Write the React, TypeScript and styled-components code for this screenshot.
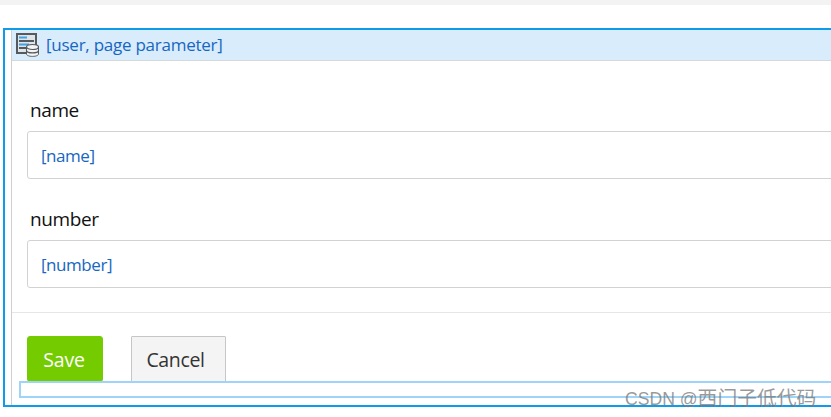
import React from "react";
import styled, { createGlobalStyle } from "styled-components";

const Global = createGlobalStyle`
  html, body { margin: 0; padding: 0; background: #fff; overflow: hidden; }
  body { width: 831px; height: 417px; font-family: "Open Sans", "Noto Sans", sans-serif; }
`;
const Page = styled.div`
  position: relative;
  width: 831px;
  height: 417px;
  overflow: hidden;
`;
const TopStrip = styled.div`
  height: 5px;
  background: #f3f3f3;
`;
const Frame = styled.div`
  box-sizing: border-box;
  margin: 23px 0 0 3px;
  width: 860px;
  height: 379px;
  border: 2px solid #0e9cea;
  padding-left: 6px;
  background: #fff;
`;
const Inner = styled.div`
  height: 100%;
  border-left: 1px solid #d0d0d0;
`;
const Header = styled.div`
  box-sizing: border-box;
  display: flex;
  align-items: center;
  gap: 7px;
  height: 31px;
  padding-left: 4px;
  background: #d9ecfb;
  border-bottom: 1px solid #d5d9dc;
  color: #1766c2;
  font-size: 17px;
  letter-spacing: -0.25px;
`;
const HeaderTitle = styled.span`
  padding-bottom: 2px;
`;
const Fields = styled.div`
  display: flex;
  flex-direction: column;
  gap: 28px;
  padding: 37px 0 24px 15px;
  border-bottom: 1px solid #e6e6e6;
`;
const Field = styled.div`
  display: flex;
  flex-direction: column;
  gap: 9px;
`;
const Label = styled.label`
  padding-left: 3px;
  font-size: 19px;
  line-height: 24px;
  color: #111;
  letter-spacing: -0.4px;
`;
const Input = styled.div`
  box-sizing: border-box;
  display: flex;
  align-items: center;
  height: 48px;
  padding-left: 13px;
  border: 1px solid #d2d2d2;
  border-radius: 3px;
  color: #1766c2;
  font-size: 17px;
  letter-spacing: -0.45px;
`;
const Actions = styled.div`
  display: flex;
  gap: 28px;
  padding: 23px 0 0 15px;
`;
const Button = styled.button<{ $primary?: boolean }>`
  box-sizing: border-box;
  height: 46px;
  padding: 0 ${(p) => (p.$primary ? "2px" : "6px")} 0 0;
  width: ${(p) => (p.$primary ? "76px" : "95px")};
  border: 1px solid ${(p) => (p.$primary ? "#74cc00" : "#c6c6c6")};
  border-radius: ${(p) => (p.$primary ? "3px" : "1px")};
  background: ${(p) => (p.$primary ? "#74cc00" : "#f4f4f4")};
  color: ${(p) => (p.$primary ? "#fff" : "#333")};
  font-family: inherit;
  font-size: 19.5px;
  letter-spacing: ${(p) => (p.$primary ? "-0.2px" : "-0.35px")};
`;
const DropZone = styled.div`
  position: absolute;
  left: 19px;
  top: 381px;
  width: 830px;
  height: 17px;
  box-sizing: border-box;
  border: 2px solid #9ed4f7;
  background: #fff;
`;
const Watermark = styled.div`
  position: absolute;
  left: 625px;
  top: 387px;
  font-family: "Liberation Sans", "Noto Sans CJK SC", sans-serif;
  font-size: 17.6px;
  line-height: 22px;
  color: rgba(120, 120, 120, 0.75);
  white-space: nowrap;
`;
const WatermarkCjk = styled.span`
  font-size: 19.8px;
`;

const DataIcon = () => (
  <svg width="23" height="24" viewBox="0 0 23 24">
    <rect x="1" y="1" width="19" height="19" fill="#dfe4e8" stroke="#555a5f" strokeWidth="2" />
    <rect x="3" y="3.5" width="8" height="2" fill="#3fa2ea" />
    <rect x="3" y="7" width="15" height="2" fill="#555a5f" />
    <rect x="3" y="10.5" width="10" height="2" fill="#3fa2ea" />
    <rect x="3" y="14" width="8" height="2" fill="#555a5f" />
    <path d="M10.5 14v7c0 1.4 2.7 2.4 6 2.4s6-1 6-2.4v-7z" fill="#f4f4f4" stroke="#555a5f" strokeWidth="1" />
    <ellipse cx="16.5" cy="14" rx="6" ry="2.5" fill="#f4f4f4" stroke="#555a5f" strokeWidth="1.2" />
    <path d="M10.5 17.5c0 1.4 2.7 2.4 6 2.4s6-1 6-2.4" fill="none" stroke="#555a5f" strokeWidth="1.4" />
  </svg>
);

export default function App() {
  return (
    <Page>
      <Global />
      <TopStrip />
      <Frame>
        <Inner>
          <Header>
            <DataIcon />
            <HeaderTitle>[user, page parameter]</HeaderTitle>
          </Header>
          <Fields>
            <Field>
              <Label>name</Label>
              <Input>[name]</Input>
            </Field>
            <Field>
              <Label>number</Label>
              <Input>[number]</Input>
            </Field>
          </Fields>
          <Actions>
            <Button $primary>Save</Button>
            <Button>Cancel</Button>
          </Actions>
        </Inner>
      </Frame>
      <DropZone />
      <Watermark>
        CSDN @<WatermarkCjk>西门子低代码</WatermarkCjk>
      </Watermark>
    </Page>
  );
}
